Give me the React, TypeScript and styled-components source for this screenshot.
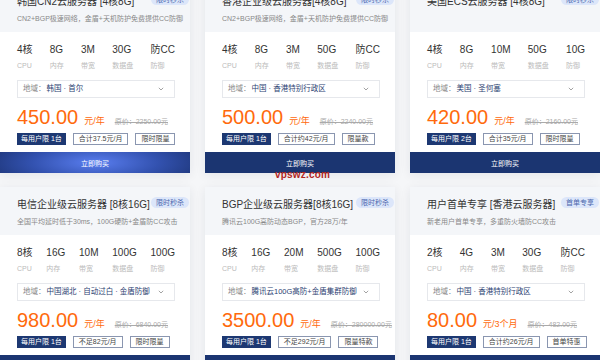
import React from 'react';
import styled, { createGlobalStyle } from 'styled-components';

const Global = createGlobalStyle`
  html, body { margin: 0; padding: 0; background: #f5f6f8; }
  body {
    font-family: "Liberation Sans", "Noto Sans CJK SC", sans-serif;
    width: 600px;
    height: 360px;
    overflow: hidden;
  }
`;

const Page = styled.div`
  position: relative;
  width: 600px;
  height: 360px;
  overflow: hidden;
`;

const Grid = styled.div`
  display: grid;
  grid-template-columns: repeat(3, 190px);
  column-gap: 15px;
  row-gap: 14px;
  margin-top: -16px;
`;

const Card = styled.div`
  position: relative;
  background: #fff;
  box-shadow: 0 2px 10px rgba(30, 40, 70, 0.08);
  display: flex;
  flex-direction: column;
`;

const Header = styled.div`
  height: 48px;
  box-sizing: border-box;
  padding: 11px 16px 0 17px;
  background: #f4f6f9;
`;

const Title = styled.div`
  font-size: 10px;
  line-height: 14px;
  color: #333;
  white-space: nowrap;
`;

const Desc = styled.div`
  margin-top: 5px;
  font-size: 7px;
  line-height: 10px;
  color: #888;
  white-space: nowrap;
`;

const Badge = styled.span`
  position: absolute;
  top: 10px;
  right: 1px;
  height: 11px;
  line-height: 11px;
  padding: 0 5px;
  border-radius: 6px;
  background: #dce6fa;
  color: #4a66ad;
  font-size: 7px;
  white-space: nowrap;
`;

const Body = styled.div`
  padding: 12px 15px 0 17px;
`;

const Specs = styled.div`
  display: flex;
  justify-content: space-between;
`;

const Spec = styled.div`
  display: flex;
  flex-direction: column;
  gap: 5px;
`;

const SpecValue = styled.span`
  font-size: 10px;
  line-height: 12px;
  color: #333;
  white-space: nowrap;
`;

const SpecLabel = styled.span`
  font-size: 7px;
  line-height: 9px;
  color: #bbb;
  white-space: nowrap;
`;

const Select = styled.div`
  margin-top: 10px;
  height: 18px;
  box-sizing: border-box;
  border: 1px solid #e6e8ec;
  display: flex;
  align-items: center;
  padding: 0 10px 0 5px;
  font-size: 7.5px;
  line-height: 10px;
`;

const SelectLabel = styled.span`
  color: #888;
`;

const SelectValue = styled.span`
  color: #2c4272;
  margin-left: 1px;
  flex: 1;
  white-space: nowrap;
`;

const PriceRow = styled.div`
  display: flex;
  align-items: baseline;
  margin-top: 7px;
  height: 24px;
  white-space: nowrap;
`;

const Price = styled.span`
  font-size: 20px;
  line-height: 24px;
  color: #ff6a0c;
`;

const Unit = styled.span`
  font-size: 9px;
  color: #ff6a0c;
  margin-left: 6px;
`;

const Orig = styled.span`
  font-size: 7px;
  color: #aaa;
  text-decoration: line-through;
  margin-left: 10px;
`;

const Tags = styled.div`
  display: flex;
  gap: 7px;
  margin-top: 4px;
`;

const Tag = styled.span<{ $primary?: boolean }>`
  height: 12px;
  box-sizing: border-box;
  line-height: 10px;
  padding: 0 ${(p) => (p.$primary ? 3 : 5)}px;
  font-size: 7px;
  border: 1px solid ${(p) => (p.$primary ? '#1d3872' : '#8a96b0')};
  background: ${(p) => (p.$primary ? '#1d3872' : '#fff')};
  color: ${(p) => (p.$primary ? '#fff' : '#444')};
  white-space: nowrap;
`;

const Buy = styled.button<{ $glow?: boolean }>`
  margin-top: 7px;
  height: 21px;
  width: 100%;
  border: 0;
  padding: 0;
  color: #fff;
  font-size: 7px;
  font-family: inherit;
  background: ${(p) =>
    p.$glow
      ? 'radial-gradient(ellipse 60% 140% at 50% 50%, #5a7ef0 0%, #3352b0 55%, #1d3577 100%)'
      : '#1b3571'};
`;

const Watermark = styled.div`
  position: absolute;
  left: 275px;
  top: 169px;
  font-size: 10px;
  line-height: 12px;
  font-weight: bold;
  color: #b3261e;
  letter-spacing: 0.2px;
`;

const Chevron = () => (
  <svg width="6" height="4" viewBox="0 0 6 4">
    <polyline points="0.8,0.8 3,3 5.2,0.8" fill="none" stroke="#999" strokeWidth="0.9" />
  </svg>
);

type Item = {
  title: string;
  badge: string;
  desc?: string;
  specs: [string, string][];
  region: string;
  price: string;
  unit: string;
  orig: string;
  tags: string[];
  glow?: boolean;
};

const L = ['CPU', '内存', '带宽', '数据盘', '防御'];
const mk = (v: string[]): [string, string][] => v.map((x, i) => [x, L[i]]);

const items: Item[] = [
  {
    title: '韩国CN2云服务器 [4核8G]',
    badge: '限时秒杀',
    desc: 'CN2+BGP极速网络，金盾+天机防护免费提供CC防御',
    specs: mk(['4核', '8G', '3M', '30G', '防CC']),
    region: '韩国 · 首尔',
    price: '450.00',
    unit: '元/年',
    orig: '原价：2250.00元',
    tags: ['每用户限 1台', '合计37.5元/月', '限时限量'],
    glow: true,
  },
  {
    title: '香港企业级云服务器[4核8G]',
    badge: '限时秒杀',
    desc: 'CN2+BGP极速网络，金盾+天机防护免费提供CC防御',
    specs: mk(['4核', '8G', '3M', '50G', '防CC']),
    region: '中国 · 香港特别行政区',
    price: '500.00',
    unit: '元/年',
    orig: '原价：2240.00元',
    tags: ['每用户限 1台', '合计约42元/月', '限量款'],
  },
  {
    title: '美国ECS云服务器 [4核8G]',
    badge: '限时秒杀',
    specs: mk(['4核', '8G', '10M', '50G', '10G']),
    region: '美国 · 圣何塞',
    price: '420.00',
    unit: '元/年',
    orig: '原价：2160.00元',
    tags: ['每用户限 2台', '合计35元/月', '限时限量'],
  },
  {
    title: '电信企业级云服务器 [8核16G]',
    badge: '限时秒杀',
    desc: '全国平均延时低于30ms，100G硬防+金盾防CC攻击',
    specs: mk(['8核', '16G', '10M', '100G', '100G']),
    region: '中国湖北 · 自动过白 · 金盾防御',
    price: '980.00',
    unit: '元/年',
    orig: '原价：6840.00元',
    tags: ['每用户限 1台', '不足82元/月', '限时限量'],
  },
  {
    title: 'BGP企业级云服务器[8核16G]',
    badge: '限时秒杀',
    desc: '腾讯云100G高防动态BGP，官方28万/年',
    specs: mk(['8核', '16G', '20M', '500G', '100G']),
    region: '腾讯云100G高防+金盾集群防御',
    price: '3500.00',
    unit: '元/年',
    orig: '原价：280000.00元',
    tags: ['每用户限 1台', '不足292元/月', '限量特款'],
  },
  {
    title: '用户首单专享 [香港云服务器]',
    badge: '首单专享',
    desc: '新老用户首单专享，多重防火墙防CC攻击',
    specs: mk(['2核', '4G', '3M', '30G', '防CC']),
    region: '中国 · 香港特别行政区',
    price: '80.00',
    unit: '元/3个月',
    orig: '原价：482.00元',
    tags: ['每用户限 1台', '合计约26元/月', '首单特惠'],
  },
];

export default function App() {
  return (
    <Page>
      <Global />
      <Grid>
        {items.map((it, i) => (
          <Card key={i}>
            <Header>
              <Title>{it.title}</Title>
              {it.desc && <Desc>{it.desc}</Desc>}
            </Header>
            <Badge>{it.badge}</Badge>
            <Body>
              <Specs>
                {it.specs.map(([v, l]) => (
                  <Spec key={l}>
                    <SpecValue>{v}</SpecValue>
                    <SpecLabel>{l}</SpecLabel>
                  </Spec>
                ))}
              </Specs>
              <Select>
                <SelectLabel>地域：</SelectLabel>
                <SelectValue>{it.region}</SelectValue>
                <Chevron />
              </Select>
              <PriceRow>
                <Price>{it.price}</Price>
                <Unit>{it.unit}</Unit>
                <Orig>{it.orig}</Orig>
              </PriceRow>
              <Tags>
                {it.tags.map((t, j) => (
                  <Tag key={t} $primary={j === 0}>
                    {t}
                  </Tag>
                ))}
              </Tags>
            </Body>
            <Buy $glow={it.glow}>立即购买</Buy>
          </Card>
        ))}
      </Grid>
      <Watermark>vpswz.com</Watermark>
    </Page>
  );
}
